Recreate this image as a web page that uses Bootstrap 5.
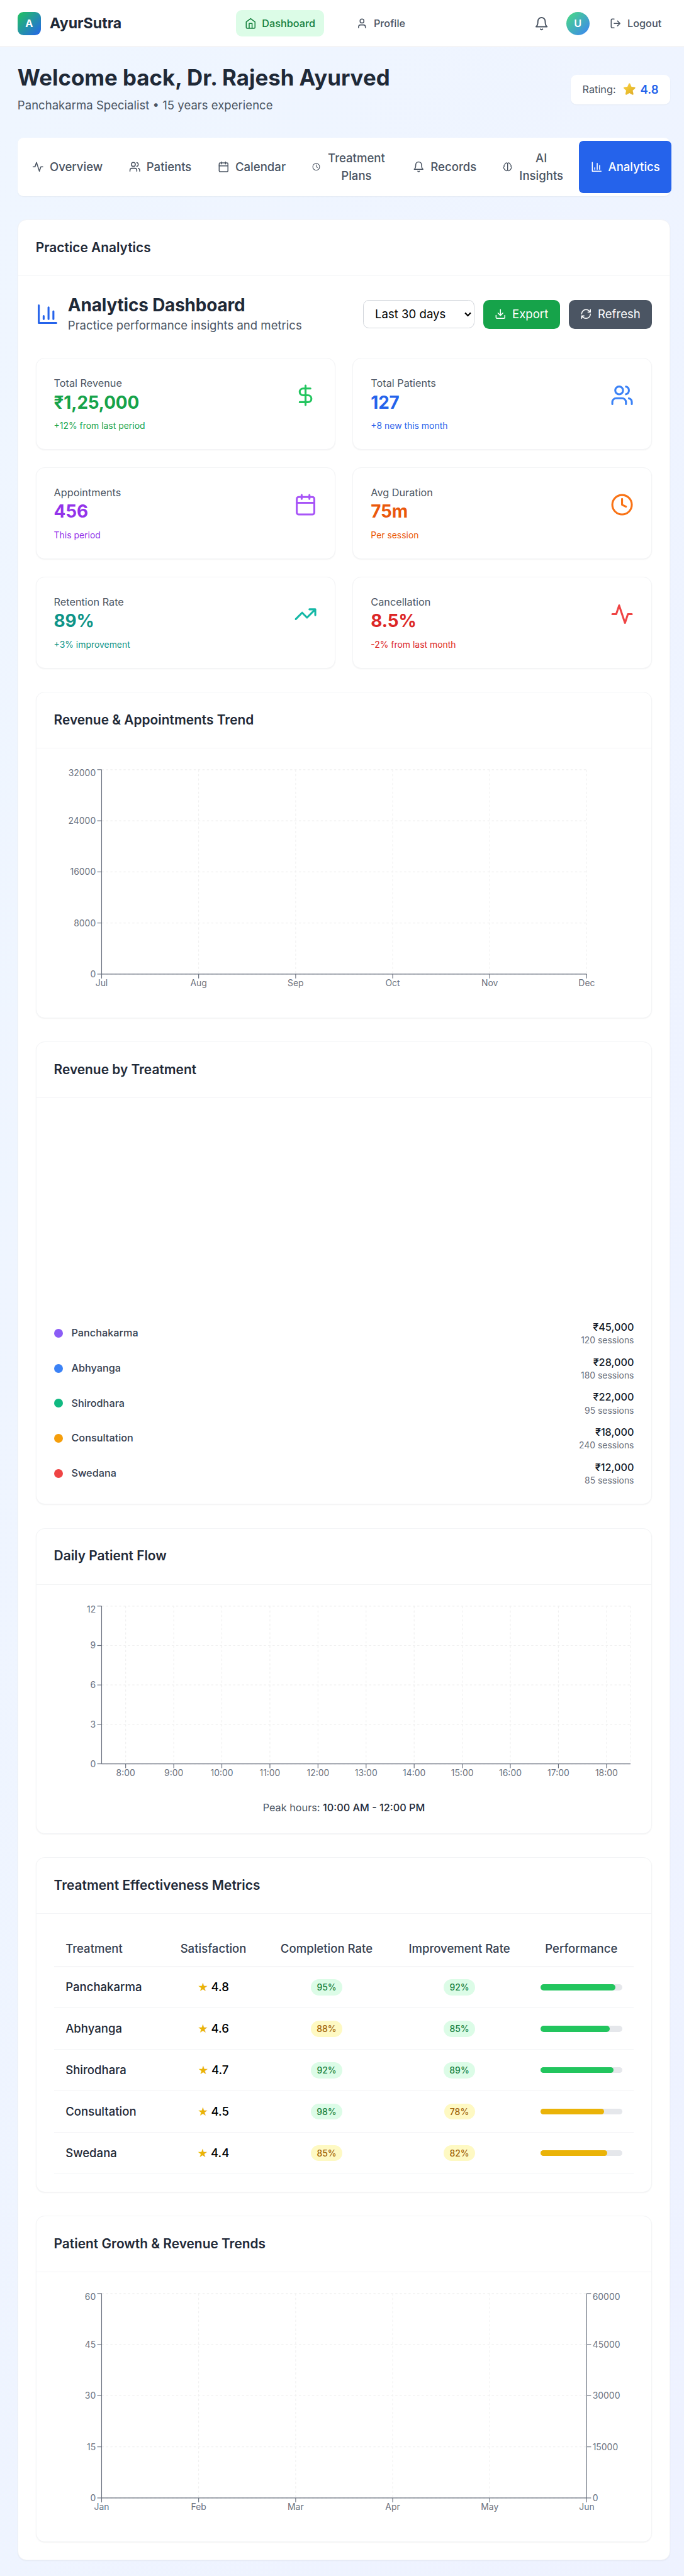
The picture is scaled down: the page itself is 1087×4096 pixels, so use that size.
<!DOCTYPE html>
<html lang="en">
<head>
<meta charset="utf-8">
<meta name="viewport" content="width=device-width, initial-scale=1">
<title>AyurSutra</title>
<link href="https://cdn.jsdelivr.net/npm/bootstrap@5.3.0/dist/css/bootstrap.min.css" rel="stylesheet">
<style>
html{font-size:18.576px}
body{font-family:Inter,"Noto Sans","DejaVu Sans",sans-serif;color:#1f2937;line-height:1.5;min-height:100vh;background:linear-gradient(to bottom right,#eff6ff,#eef2ff);overflow-x:hidden}
h1,h2,h3,p{margin:0}
.ico{width:1rem;height:1rem;fill:none;stroke:currentColor;stroke-width:2;stroke-linecap:round;stroke-linejoin:round;flex-shrink:0}
.ico-20{width:1.25rem;height:1.25rem}
.ico-32{width:2rem;height:2rem}
.t-sm{font-size:.875rem;line-height:1.25rem}
.t-xs{font-size:.75rem;line-height:1rem}
.c6{color:#4b5563}
.gap-12{gap:.75rem}
.topbar{height:4.05rem;background:#fff;border-bottom:1px solid #e5e7eb;padding:0 1.175rem 0 1.5rem}
.top-nav{gap:2rem}
.logo-box{width:2rem;height:2rem;border-radius:.5rem;background:linear-gradient(to bottom right,#22c55e,#2563eb);color:#fff;font-weight:700;font-size:.875rem}
.avatar{width:2rem;height:2rem;border-radius:50%;background:linear-gradient(to bottom right,#4ade80,#3b82f6);color:#fff;font-weight:600;font-size:.875rem}
.brand-name{font-size:1.25rem;font-weight:700;line-height:1.75rem}
.top-link{padding:.5rem .75rem;border-radius:.5rem;font-size:.875rem;line-height:1.25rem;font-weight:500;color:#4b5563;text-decoration:none}
.top-link.current{background:#dcfce7;color:#15803d}
.page{padding:1.5rem 1.175rem 1.5rem 1.5rem}
.hello{font-size:1.875rem;line-height:2.25rem;font-weight:700}
.rating{background:#fff;border-radius:.5rem;padding:.5rem 1rem;box-shadow:0 1px 2px rgba(0,0,0,.05);height:2.5rem}
.rating-star{width:1rem;height:1.2rem;margin:0 .42rem 0 .68rem}
.rating-val{color:#2563eb;font-weight:600}
.tabs{background:#fff;border-radius:.5rem;padding:.25rem;gap:.25rem;margin:2rem 0;height:5rem;box-shadow:0 1px 2px rgba(0,0,0,.05)}
.tab-btn{border:0;background:none;border-radius:.375rem;padding:.75rem 1rem;font-weight:500;color:#4b5563;line-height:1.5rem;flex:none}
.tab-btn.current{background:#2563eb;color:#fff}
.ico-tp{width:.7rem}.txt-tp{width:5.2rem}
.ico-ai{width:.82rem}.txt-ai{width:3.95rem}
.panel{background:#fff;border:1px solid #f3f4f6;border-radius:.75rem;box-shadow:0 1px 2px rgba(0,0,0,.05)}
.panel-h{padding:1.5rem;border-bottom:1px solid #f3f4f6;font-size:1.125rem;line-height:1.75rem;font-weight:600}
.panel-b{padding:1.5rem}
.stack{display:flex;flex-direction:column;gap:2rem}
.dash-t{font-size:1.5rem;line-height:2rem;font-weight:700;letter-spacing:-.005em}
.dash-ico{color:#2563eb}
.period{appearance:none;width:9.54rem;height:2.4rem;border:1px solid #d1d5db;border-radius:.5rem;padding:0 1rem;font-size:1rem;color:#000;background:#fff url("data:image/svg+xml,%3Csvg xmlns='http://www.w3.org/2000/svg' viewBox='0 0 10 7'%3E%3Cpath d='M1 1.2l4 4 4-4' fill='none' stroke='%23000' stroke-width='1.9'/%3E%3C/svg%3E") no-repeat right .22rem center/.58rem auto}
.act{height:2.5rem;border:0;border-radius:.5rem;padding:0 1rem;color:#fff;line-height:1.5rem;font-size:1rem}
.act-g{background:#16a34a}.act-s{background:#4b5563}
.stats{display:grid;grid-template-columns:1fr 1fr;gap:1.5rem}
.num{font-size:1.5rem;line-height:2rem;font-weight:700;letter-spacing:-.005em}
.chart{display:block;width:100%;overflow:visible;font-size:12px;fill:#6b7280}
.pie-space{height:17.5rem}
.dot{width:.75rem;height:.75rem;border-radius:50%}
.lg-name{color:#374151;font-weight:500}
.lg-amt{color:#111827;font-weight:500}
.lg-ses{color:#6b7280}
.peak{color:#1f2937;font-weight:500}
.tx{width:100%;table-layout:fixed;border-collapse:collapse}
.tx th{font-weight:500;color:#374151;padding:.75rem 1rem;border-bottom:1px solid #e5e7eb;text-align:center;white-space:nowrap}
.tx td{padding:0 1rem;border-bottom:1px solid #f3f4f6;text-align:center;font-weight:500;line-height:1.5rem;height:3.55rem}
.tx th:first-child,.tx td:first-child{text-align:left}
.tx .score{color:#000}
.star{color:#eab308;margin-right:.25rem;font-family:"DejaVu Sans",sans-serif;font-weight:400;line-height:1}
.pill{font-size:.75rem;padding:.25rem .5rem;border-radius:99rem;font-weight:500}
.pill.g{background:#dcfce7;color:#15803d}.pill.y{background:#fef9c3;color:#a16207}
.track{height:.5rem;border-radius:99rem;background:#e5e7eb}
.fillbar{height:.5rem;border-radius:99rem;background:#22c55e}
.fillbar.y{background:#eab308}
</style>
</head>
<body>
<svg width="0" height="0" class="position-absolute" aria-hidden="true"><defs>
<linearGradient id="gold" x1="0" y1="0" x2="1" y2="1"><stop offset="0" stop-color="#fbd04a"/><stop offset=".5" stop-color="#ecc02f"/><stop offset="1" stop-color="#dba72c"/></linearGradient>
<symbol id="activity" viewBox="0 0 24 24"><path d="M22 12h-4l-3 9L9 3l-3 9H2"/></symbol>
<symbol id="users" viewBox="0 0 24 24"><path d="M16 21v-2a4 4 0 0 0-4-4H6a4 4 0 0 0-4 4v2"/><circle cx="9" cy="7" r="4"/><path d="M22 21v-2a4 4 0 0 0-3-3.87M16 3.13a4 4 0 0 1 0 7.75"/></symbol>
<symbol id="calendar" viewBox="0 0 24 24"><rect x="3" y="4" width="18" height="18" rx="2"/><path d="M16 2v4M8 2v4M3 10h18"/></symbol>
<symbol id="clock" viewBox="0 0 24 24"><circle cx="12" cy="12" r="10"/><path d="M12 6v6l4 2"/></symbol>
<symbol id="bell" viewBox="0 0 24 24"><path d="M6 8a6 6 0 0 1 12 0c0 7 3 9 3 9H3s3-2 3-9M10.3 21a1.94 1.94 0 0 0 3.4 0"/></symbol>
<symbol id="brain" viewBox="0 0 24 24"><path d="M9.5 2A2.5 2.5 0 0 1 12 4.5v15a2.5 2.5 0 0 1-4.96.44 2.5 2.5 0 0 1-2.96-3.08 3 3 0 0 1-.34-5.58 2.5 2.5 0 0 1 1.32-4.24 2.5 2.5 0 0 1 1.98-3A2.5 2.5 0 0 1 9.5 2Z"/><path d="M14.5 2A2.5 2.5 0 0 0 12 4.5v15a2.5 2.5 0 0 0 4.96.44 2.5 2.5 0 0 0 2.96-3.08 3 3 0 0 0 .34-5.58 2.5 2.5 0 0 0-1.32-4.24 2.5 2.5 0 0 0-1.98-3A2.5 2.5 0 0 0 14.5 2Z"/></symbol>
<symbol id="bars" viewBox="0 0 24 24"><path d="M3 3v18h18M18 17V9M13 17V5M8 17v-3"/></symbol>
<symbol id="home" viewBox="0 0 24 24"><path d="m3 9 9-7 9 7v11a2 2 0 0 1-2 2H5a2 2 0 0 1-2-2zM9 22V12h6v10"/></symbol>
<symbol id="user" viewBox="0 0 24 24"><path d="M19 21v-2a4 4 0 0 0-4-4H9a4 4 0 0 0-4 4v2"/><circle cx="12" cy="7" r="4"/></symbol>
<symbol id="logout" viewBox="0 0 24 24"><path d="M9 21H5a2 2 0 0 1-2-2V5a2 2 0 0 1 2-2h4M16 17l5-5-5-5M21 12H9"/></symbol>
<symbol id="download" viewBox="0 0 24 24"><path d="M21 15v4a2 2 0 0 1-2 2H5a2 2 0 0 1-2-2v-4M7 10l5 5 5-5M12 15V3"/></symbol>
<symbol id="refresh" viewBox="0 0 24 24"><path d="M3 12a9 9 0 0 1 9-9 9.75 9.75 0 0 1 6.74 2.74L21 8M21 3v5h-5M21 12a9 9 0 0 1-9 9 9.75 9.75 0 0 1-6.74-2.74L3 16M8 16H3v5"/></symbol>
<symbol id="dollar" viewBox="0 0 24 24"><path d="M12 2v20M17 5H9.5a3.5 3.5 0 0 0 0 7h5a3.5 3.5 0 0 1 0 7H6"/></symbol>
<symbol id="trend" viewBox="0 0 24 24"><path d="m22 7-8.500 8.500-5-5L2 17M16 7h6v6"/></symbol>
</defs></svg>

<header class="topbar d-flex justify-content-between align-items-center">
  <div class="d-flex align-items-center gap-12">
    <div class="logo-box d-flex align-items-center justify-content-center">A</div>
    <span class="brand-name">AyurSutra</span>
  </div>
  <nav class="top-nav d-flex">
    <a class="top-link current d-flex align-items-center gap-2"><svg class="ico"><use href="#home"/></svg>Dashboard</a>
    <a class="top-link d-flex align-items-center gap-2"><svg class="ico"><use href="#user"/></svg>Profile</a>
  </nav>
  <div class="d-flex align-items-center gap-3">
    <span class="p-2 d-flex c6"><svg class="ico ico-20"><use href="#bell"/></svg></span>
    <div class="avatar d-flex align-items-center justify-content-center">U</div>
    <a class="top-link d-flex align-items-center gap-2"><svg class="ico"><use href="#logout"/></svg>Logout</a>
  </div>
</header>

<main class="page">
  <div class="d-flex justify-content-between align-items-center">
    <div>
      <h1 class="hello">Welcome back, Dr. Rajesh Ayurved</h1>
      <p class="c6 mt-2">Panchakarma Specialist • 15 years experience</p>
    </div>
    <div class="rating d-flex align-items-center">
      <span class="t-sm c6">Rating:</span>
      <svg class="rating-star" viewBox="1 0 20 23"><path d="M11 1c.8 0 1.200.6 1.500 1.400l2 4.700 5.200.5c1.500.2 1.900 1.300.8 2.300l-3.900 3.500 1.200 5.600c.3 1.500-.8 2.200-2 1.500L11 17.800l-4.800 2.700c-1.200.7-2.300 0-2-1.500l1.200-5.600-3.900-3.500c-1.100-1-.7-2.100.8-2.300l5.200-.5 2-4.700c.3-.8.7-1.400 1.500-1.400z" fill="url(#gold)"/></svg>
      <span class="rating-val">4.8</span>
    </div>
  </div>

  <div class="tabs d-flex">
    <button class="tab-btn d-flex align-items-center gap-2"><svg class="ico"><use href="#activity"/></svg>Overview</button>
    <button class="tab-btn d-flex align-items-center gap-2"><svg class="ico"><use href="#users"/></svg>Patients</button>
    <button class="tab-btn d-flex align-items-center gap-2"><svg class="ico"><use href="#calendar"/></svg>Calendar</button>
    <button class="tab-btn d-flex align-items-center gap-2"><svg class="ico ico-tp"><use href="#clock"/></svg><span class="txt-tp">Treatment Plans</span></button>
    <button class="tab-btn d-flex align-items-center gap-2"><svg class="ico"><use href="#bell"/></svg>Records</button>
    <button class="tab-btn d-flex align-items-center gap-2"><svg class="ico ico-ai"><use href="#brain"/></svg><span class="txt-ai">AI Insights</span></button>
    <button class="tab-btn current d-flex align-items-center gap-2"><svg class="ico"><use href="#bars"/></svg>Analytics</button>
  </div>

  <section class="panel">
    <h3 class="panel-h">Practice Analytics</h3>
    <div class="panel-b stack">
      <div class="d-flex justify-content-between align-items-center">
        <div class="d-flex align-items-center gap-12">
          <svg class="ico ico-32 dash-ico"><use href="#bars"/></svg>
          <div><h2 class="dash-t">Analytics Dashboard</h2><p class="c6">Practice performance insights and metrics</p></div>
        </div>
        <div class="d-flex align-items-center gap-12">
          <select class="period"><option>Last 30 days</option></select>
          <button class="act act-g d-flex align-items-center gap-2"><svg class="ico"><use href="#download"/></svg>Export</button>
          <button class="act act-s d-flex align-items-center gap-2"><svg class="ico"><use href="#refresh"/></svg>Refresh</button>
        </div>
      </div>

      <div class="stats" id="stats"></div>

      <section class="panel"><h3 class="panel-h">Revenue &amp; Appointments Trend</h3><div class="panel-b"><svg class="chart" id="c1" viewBox="0 0 794 320"></svg></div></section>

      <section class="panel"><h3 class="panel-h">Revenue by Treatment</h3><div class="panel-b"><div class="pie-space"></div><div class="d-flex flex-column gap-12" id="legend"></div></div></section>

      <section class="panel"><h3 class="panel-h">Daily Patient Flow</h3><div class="panel-b"><svg class="chart" id="c2" viewBox="0 0 794 256"></svg><p class="t-sm c6 text-center mt-3">Peak hours: <span class="peak">10:00 AM - 12:00 PM</span></p></div></section>

      <section class="panel"><h3 class="panel-h">Treatment Effectiveness Metrics</h3><div class="panel-b">
        <table class="tx">
          <colgroup><col style="width:18.94%"><col style="width:17.12%"><col style="width:21.91%"><col style="width:23.88%"><col style="width:18.15%"></colgroup>
          <thead><tr><th>Treatment</th><th>Satisfaction</th><th>Completion Rate</th><th>Improvement Rate</th><th>Performance</th></tr></thead>
          <tbody id="rows"></tbody>
        </table></div></section>

      <section class="panel"><h3 class="panel-h">Patient Growth &amp; Revenue Trends</h3><div class="panel-b"><svg class="chart" id="c3" viewBox="0 0 794 320"></svg></div></section>
    </div>
  </section>
</main>

<script src="https://cdn.jsdelivr.net/npm/bootstrap@5.3.0/dist/js/bootstrap.bundle.min.js"></script>
<script>
const el = id => document.getElementById(id);

// Stat cards: label, value, note, text colour, icon, icon colour
el('stats').innerHTML = [
  ['Total Revenue','₹1,25,000','+12% from last period','#16a34a','dollar','#22c55e'],
  ['Total Patients','127','+8 new this month','#2563eb','users','#3b82f6'],
  ['Appointments','456','This period','#9333ea','calendar','#a855f7'],
  ['Avg Duration','75m','Per session','#ea580c','clock','#f97316'],
  ['Retention Rate','89%','+3% improvement','#0d9488','trend','#14b8a6'],
  ['Cancellation','8.5%','-2% from last month','#dc2626','activity','#ef4444']
].map(([l,v,n,c,i,ic]) => `<div class="panel panel-b"><div class="d-flex justify-content-between align-items-center"><div><p class="t-sm c6">${l}</p><p class="num" style="color:${c}">${v}</p></div><svg class="ico ico-32" style="color:${ic}"><use href="#${i}"/></svg></div><p class="t-xs mt-2" style="color:${c}">${n}</p></div>`).join('');

el('legend').innerHTML = [
  ['Panchakarma','45,000',120,'#8b5cf6'],['Abhyanga','28,000',180,'#3b82f6'],['Shirodhara','22,000',95,'#10b981'],
  ['Consultation','18,000',240,'#f59e0b'],['Swedana','12,000',85,'#ef4444']
].map(([n,a,s,c]) => `<div class="d-flex justify-content-between align-items-center"><div class="d-flex align-items-center gap-12"><span class="dot" style="background:${c}"></span><span class="t-sm lg-name">${n}</span></div><div class="text-end"><p class="t-sm lg-amt">₹${a}</p><p class="t-xs lg-ses">${s} sessions</p></div></div>`).join('');

const pill = (v,min) => `<span class="pill ${v>=min?'g':'y'}">${v}%</span>`;
el('rows').innerHTML = [
  ['Panchakarma','4.8',95,92],['Abhyanga','4.6',88,85],['Shirodhara','4.7',92,89],['Consultation','4.5',98,78],['Swedana','4.4',85,82]
].map(([n,s,c,i]) => `<tr><td>${n}</td><td class="score"><span class="star">★</span>${s}</td><td>${pill(c,90)}</td><td>${pill(i,85)}</td><td><div class="track"><div class="fillbar ${i>=85?'':'y'}" style="width:${i}%"></div></div></td></tr>`).join('');

// Cartesian axes with a dashed grid. band: categories sit at band centres.
function axes(id, h, right, ys, xs, ysRight, band) {
  const L = 65, T = 5, B = h - 35, R = right, n = xs.length;
  const xp = i => band ? L + (R - L) * (i + .5) / n : L + (R - L) * i / (n - 1);
  const yp = i => B - (B - T) * i / (ys.length - 1);
  const line = (a,b,c,d,e) => `<line x1="${a}" y1="${b}" x2="${c}" y2="${d}" ${e}/>`;
  const g = 'stroke="#f0f0f0" stroke-dasharray="3 3"', a = 'stroke="#6b7280"';
  let s = '';
  ys.forEach((_, i) => s += line(L, yp(i), R, yp(i), g));
  xs.forEach((_, i) => s += line(xp(i), T, xp(i), B, g));
  if (band) s += line(R, T, R, B, g);
  s += line(L, B, R, B, a) + line(L, T, L, B, a);
  const ty = i => yp(i) + 4.3 + (i === ys.length - 1 ? 4.3 : 0);
  ys.forEach((t, i) => s += line(L - 6, yp(i), L, yp(i), a) + `<text x="${L-8}" y="${ty(i)}" text-anchor="end">${t}</text>`);
  xs.forEach((t, i) => s += line(xp(i), B, xp(i), B + 6, a) + `<text x="${xp(i)}" y="${B+16.5}" text-anchor="middle">${t}</text>`);
  if (ysRight) {
    s += line(R, T, R, B, a);
    ysRight.forEach((t, i) => s += line(R, yp(i), R + 6, yp(i), a) + `<text x="${R+8}" y="${ty(i)}">${t}</text>`);
  }
  el(id).innerHTML = s;
}
axes('c1', 320, 729, [0,8000,16000,24000,32000], ['Jul','Aug','Sep','Oct','Nov','Dec']);
axes('c2', 256, 789, [0,3,6,9,12], [8,9,10,11,12,13,14,15,16,17,18].map(t => t + ':00'), null, true);
axes('c3', 320, 729, [0,15,30,45,60], ['Jan','Feb','Mar','Apr','May','Jun'], [0,15000,30000,45000,60000]);
</script>
</body>
</html>
